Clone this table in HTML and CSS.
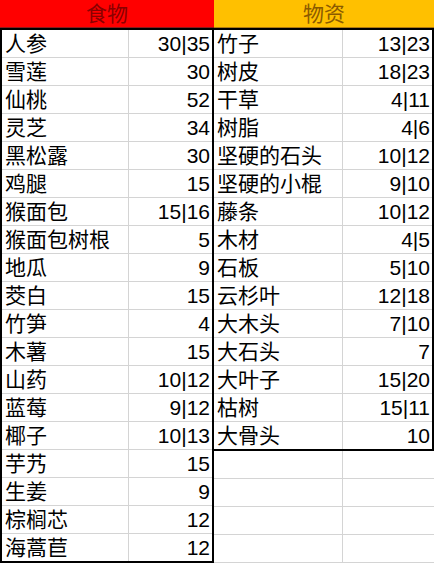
FILE: index.html
```html
<!DOCTYPE html>
<html lang="zh">
<head>
<meta charset="utf-8">
<link rel="stylesheet" href="styles.css">
</head>
<body>
<div class="sheet">
  <div class="tbl left">
    <div class="hdr red">食物</div>
    <div class="body">
      <div class="row"><div class="name">人参</div><div class="num">30|35</div></div>
      <div class="row"><div class="name">雪莲</div><div class="num">30</div></div>
      <div class="row"><div class="name">仙桃</div><div class="num">52</div></div>
      <div class="row"><div class="name">灵芝</div><div class="num">34</div></div>
      <div class="row"><div class="name">黑松露</div><div class="num">30</div></div>
      <div class="row"><div class="name">鸡腿</div><div class="num">15</div></div>
      <div class="row"><div class="name">猴面包</div><div class="num">15|16</div></div>
      <div class="row"><div class="name">猴面包树根</div><div class="num">5</div></div>
      <div class="row"><div class="name">地瓜</div><div class="num">9</div></div>
      <div class="row"><div class="name">茭白</div><div class="num">15</div></div>
      <div class="row"><div class="name">竹笋</div><div class="num">4</div></div>
      <div class="row"><div class="name">木薯</div><div class="num">15</div></div>
      <div class="row"><div class="name">山药</div><div class="num">10|12</div></div>
      <div class="row"><div class="name">蓝莓</div><div class="num">9|12</div></div>
      <div class="row"><div class="name">椰子</div><div class="num">10|13</div></div>
      <div class="row"><div class="name">芋艿</div><div class="num">15</div></div>
      <div class="row"><div class="name">生姜</div><div class="num">9</div></div>
      <div class="row"><div class="name">棕榈芯</div><div class="num">12</div></div>
      <div class="row last"><div class="name">海蒿苣</div><div class="num">12</div></div>
    </div>
  </div>
  <div class="tbl right">
    <div class="hdr orange">物资</div>
    <div class="body">
      <div class="row"><div class="name">竹子</div><div class="num">13|23</div></div>
      <div class="row"><div class="name">树皮</div><div class="num">18|23</div></div>
      <div class="row"><div class="name">干草</div><div class="num">4|11</div></div>
      <div class="row"><div class="name">树脂</div><div class="num">4|6</div></div>
      <div class="row"><div class="name">坚硬的石头</div><div class="num">10|12</div></div>
      <div class="row"><div class="name">坚硬的小棍</div><div class="num">9|10</div></div>
      <div class="row"><div class="name">藤条</div><div class="num">10|12</div></div>
      <div class="row"><div class="name">木材</div><div class="num">4|5</div></div>
      <div class="row"><div class="name">石板</div><div class="num">5|10</div></div>
      <div class="row"><div class="name">云杉叶</div><div class="num">12|18</div></div>
      <div class="row"><div class="name">大木头</div><div class="num">7|10</div></div>
      <div class="row"><div class="name">大石头</div><div class="num">7</div></div>
      <div class="row"><div class="name">大叶子</div><div class="num">15|20</div></div>
      <div class="row"><div class="name">枯树</div><div class="num">15|11</div></div>
      <div class="row last"><div class="name">大骨头</div><div class="num">10</div></div>
    </div>
    <div class="filler">
      <div class="row empty"><div class="name"></div><div class="num"></div></div>
      <div class="row empty"><div class="name"></div><div class="num"></div></div>
      <div class="row empty"><div class="name"></div><div class="num"></div></div>
      <div class="row empty"><div class="name"></div><div class="num"></div></div>
    </div>
  </div>
</div>
</body>
</html>
```

FILE: styles.css
```css
html, body {
  margin: 0;
  padding: 0;
  background: #ffffff;
}
body {
  font-family: "Liberation Sans", "Noto Sans CJK SC", sans-serif;
  font-size: 21px;
  color: #000;
  width: 435px;
  height: 565px;
  overflow: hidden;
}
.sheet {
  display: flex;
  align-items: flex-start;
}
.tbl {
  display: flex;
  flex-direction: column;
}
.left { width: 214px; }
.right { width: 220px; }
.hdr {
  height: 27px;
  border-bottom: 1px solid #8a1a1a;
  display: flex;
  align-items: center;
  justify-content: center;
  font-size: 21px;
  line-height: 1;
}
.red {
  background: #ff0000;
  color: #8a0000;
}
.orange {
  background: #ffc000;
  color: #8a5a00;
  border-bottom-color: #b07a10;
}
.body {
  border-top: 2px solid #000;
  border-bottom: 2px solid #000;
}
.left .body {
  border-left: 2px solid #000;
  border-right: 2px solid #000;
}
.right .body {
  border-right: 2px solid #000;
}
.row {
  display: flex;
  height: 27px;
  border-bottom: 1px solid #d4d4d4;
  line-height: 27px;
}
.row.last {
  height: 27px;
  border-bottom: none;
}
.name {
  padding-left: 3px;
  white-space: nowrap;
  border-right: 1px solid #d4d4d4;
}
.num {
  flex: 1;
  text-align: right;
  padding-right: 2px;
  white-space: nowrap;
}
.left .name { width: 123px; }
.right .name { width: 125px; }
.filler .row {
  height: 27px;
  border-bottom: 1px solid #d4d4d4;
}
```
